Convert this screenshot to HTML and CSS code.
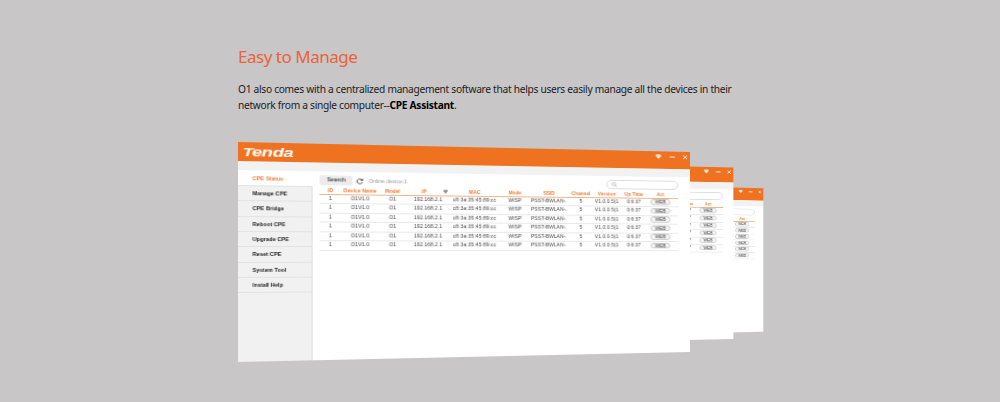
FILE: index.html
```
<!DOCTYPE html>
<html lang="en">
<head>
    <meta charset="UTF-8">
    <meta name="viewport" content="width=device-width, initial-scale=1.0">
    <title>Easy to Manage</title>
    <link rel="stylesheet" href="styles.css">
</head>
<body>

    <section class="manage">
        <h2>Easy to Manage</h2>
        <p class="intro">O1 also comes with a centralized management software that helps users easily manage all the devices in their<br>network from a single computer--<b>CPE Assistant</b>.</p>
        <div class="windows" id="windows"></div>
    </section>

    <template id="window">
        <div class="window">
            <div class="titlebar">
                <span class="logo"><span class="initial">T</span>enda</span>
                <div class="controls">
                    <svg width="6" height="6" viewBox="0 0 6 6"><path d="M0.6 0.6h4.8v1.8L3 5 0.6 2.4z" fill="#fff"/><path d="M1 2h4" stroke="#ee7220" stroke-width=".4"/></svg>
                    <svg width="6" height="6" viewBox="0 0 6 6"><path d="M0.3 3h5.4" stroke="#fff"/></svg>
                    <svg width="6" height="6" viewBox="0 0 6 6"><path d="M1 1l4 4M5 1l-4 4" stroke="#fff" stroke-width=".9"/></svg>
                </div>
            </div>
            <div class="strip"></div>
            <div class="body">
                <ul class="menu">
                    <li class="active">CPE Status</li>
                    <li>Manage CPE</li>
                    <li>CPE Bridge</li>
                    <li>Reboot CPE</li>
                    <li>Upgrade CPE</li>
                    <li>Reset CPE</li>
                    <li>System Tool</li>
                    <li>Install Help</li>
                </ul>
                <div class="main">
                    <div class="tools">
                        <span class="search-btn">Search</span>
                        <svg class="reload" width="7" height="7" viewBox="0 0 7 7"><path d="M5.6 2.2A2.5 2.5 0 1 0 5.9 4.2" fill="none" stroke="#444" stroke-width=".9"/><path d="M6.3 .6v2.3H4z" fill="#444"/></svg>
                        <span class="online">Online device:1</span>
                        <span class="search-box"><svg width="6" height="6" viewBox="0 0 6 6"><circle cx="2.5" cy="2.5" r="1.7" fill="none" stroke="#999" stroke-width=".6"/><path d="M3.8 3.8l1.7 1.7" stroke="#999" stroke-width=".7"/></svg></span>
                    </div>
                    <div class="row head">
                        <span>ID</span><span>Device Name</span><span>Model</span>
                        <span class="ip">IP<svg width="4" height="4" viewBox="0 0 4 4"><path d="M.3 .8h3.4L2 3.6z" fill="#aaa" stroke="#444" stroke-width=".6"/></svg></span>
                        <span>MAC</span><span>Mode</span><span>SSID</span><span>Channel</span><span>Version</span><span>Up Time</span><span>Act</span>
                    </div>
                </div>
            </div>
        </div>
    </template>

    <script>
        const template = document.getElementById("window");
        const cells = ["1", "O1V1.0", "O1", "192.168.2.1", "c8:3a:35:45:89:cc", "WISP", "PSST-BWLAN-.", "5", "V1.0.0.5(1", "0:6:37"];

        // back window first, the front one is drawn last
        ["back", "middle", "front"].forEach((name) => {
            const copy = template.content.cloneNode(true);
            copy.querySelector(".window").classList.add(name);
            const main = copy.querySelector(".main");
            for (let i = 0; i < 6; i++) {
                const row = document.createElement("div");
                row.className = "row";
                row.innerHTML = cells.map((c) => `<span>${c}</span>`).join("") + '<span><i class="web">WEB</i></span>';
                main.appendChild(row);
            }
            document.getElementById("windows").appendChild(copy);
        })
    </script>
</body>
</html>
```
FILE: styles.css
```
*{
    margin: 0;
    padding: 0;
    box-sizing: border-box;
}

body {
    background-color: #c8c6c7;
    font-family: "Noto Sans", "Open Sans", sans-serif;
    height: 402px;
    overflow: hidden;
}

.manage{
    width: 526px;
    margin-left: 238px;
    padding-top: 45px;
}

h2{
    font-size: 17px;
    font-weight: 400;
    line-height: 24px;
    letter-spacing: -0.48px;
    color: #e8643a;
    white-space: nowrap;
}

.intro{
    margin-top: 12px;
    font-size: 10.2px;
    line-height: 16px;
    letter-spacing: -0.29px;
    color: #1c1c1c;
    white-space: nowrap;
}
.intro b{
    color: #000;
}

.windows{
    position: relative;
    height: 220px;
    margin-top: 29px;
}

/* windows are seen turned to the right, in perspective */
.window{
    --turn: matrix3d(1.18381, 0.0261905, 0, 0.0002381, 0, 1, 0, 0, 0, 0, 1, 0, 0, 0, 0, 1);
    position: absolute;
    width: 420px;
    height: 219.5px;
    background-color: #fff;
    overflow: hidden;
    transform-origin: 0 0;
    font-family: "Liberation Sans", Arial, sans-serif;
    font-size: 4.9px;
    color: #444;
}
.front{
    left: 0;
    top: 0;
    transform: var(--turn);
}
.middle{
    left: 107.6px;
    top: 16.6px;
    transform: scale(0.857) var(--turn);
}
.back{
    left: 200.7px;
    top: 39px;
    transform: scale(0.7175) var(--turn);
}

.titlebar{
    display: flex;
    justify-content: space-between;
    height: 18.6px;
    padding: 0 2px 0 4px;
    background-color: #ee7220;
}
.logo{
    font-size: 12.5px;
    line-height: 21px;
    font-weight: bold;
    font-style: italic;
    letter-spacing: -0.3px;
    color: #fff;
    transform: scaleX(1.27);
    transform-origin: 0 0;
}
.logo .initial{
    font-size: 11.5px;
    letter-spacing: -1px;
}
.controls{
    display: flex;
    gap: 7.5px;
    padding-top: 2.6px;
}
.strip{
    height: 9px;
    background-color: #f2f2f2;
}

.body{
    display: flex;
    height: 192px;
}
.menu{
    width: 64px;
    background-color: #f1f1f1;
    border-right: 1px solid #dfdfdf;
    list-style: none;
}
.menu li{
    height: 15.3px;
    padding-left: 12.3px;
    line-height: 15.3px;
    font-size: 4.9px;
    font-weight: bold;
    color: #222;
    border-bottom: 1px solid #e2e2e2;
    white-space: nowrap;
}
.menu li.active{
    width: 64px;
    height: 16.6px;
    line-height: 18px;
    background-color: #fff;
    color: #ee7a35;
}

.main{
    width: 337.3px;
    margin-left: 6.4px;
    padding-top: 4px;
}
.tools{
    display: flex;
    align-items: center;
    height: 11px;
}
.search-btn{
    width: 29px;
    height: 10px;
    line-height: 10px;
    border-radius: 2px;
    background-color: #ececec;
    text-align: center;
    font-size: 4.9px;
    font-weight: bold;
}
.reload{
    margin: 0 4px 0 3px;
}
.online{
    font-size: 5px;
    color: #999;
}
.search-box{
    display: flex;
    align-items: center;
    width: 72px;
    height: 9.6px;
    margin-left: auto;
    padding-left: 4px;
    border: 1px solid #dcdcdc;
    border-radius: 5px;
}

.row{
    display: grid;
    grid-template-columns: 18.4px 33.8px 24.4px 40px 46px 29.6px 35.2px 26.8px 24.2px 29.2px 24.2px;
    height: 9.5px;
    line-height: 8.6px;
    border-bottom: 1px solid #e8e8e8;
    text-align: center;
    white-space: nowrap;
}
.row span{
    display: flex;
    justify-content: center;
}
.row span:nth-child(5), .row span:nth-child(9){
    letter-spacing: 0.1px;
}
.head{
    height: 9px;
    line-height: 9.4px;
    font-size: 4.7px;
    font-weight: bold;
    color: #ee7a35;
    border-bottom: 1px solid #f3b284;
}
.head .ip{
    align-items: center;
    gap: 15px;
    padding-left: 12px;
}
.web{
    width: 20px;
    height: 6.6px;
    margin-top: 0.8px;
    line-height: 5px;
    border: 1px solid #ccc;
    border-radius: 3px;
    background-color: #f4f4f4;
    font-style: normal;
}
```
